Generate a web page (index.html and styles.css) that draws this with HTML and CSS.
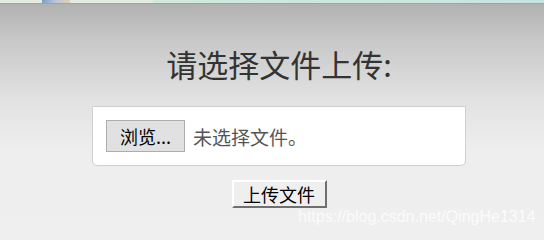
FILE: index.html
```html
<!DOCTYPE html>
<html lang="zh-CN">
<head>
  <meta charset="UTF-8" />
  <meta name="viewport" content="width=device-width, initial-scale=1" />
  <title>文件上传</title>
  <link rel="stylesheet" href="styles.css">
</head>
<body>

  <div class="banner">
    <span class="banner-left"><span class="avatar"></span></span>
    <span class="banner-right"></span>
  </div>

  <form class="upload" action="#" method="post" enctype="multipart/form-data">
    <h2>请选择文件上传:</h2>

    <div class="file-box">
      <span class="browse">浏览...</span>
      <span class="file-name">未选择文件。</span>
    </div>

    <button type="submit">上传文件</button>
  </form>

  <div class="watermark">https://blog.csdn.net/QingHe1314</div>

</body>
</html>
```

FILE: styles.css
```css
html, body {
  height: 100%;
}
body {
  margin: 0;
  font-family: "Noto Sans CJK SC", "Liberation Sans", sans-serif;
  background: linear-gradient(to bottom, #afafaf 0px, #c8c8c8 40px, #e2e2e2 100px, #eeeeee 150px, #efefef 240px);
  color: #333;
  overflow: hidden;
}
.banner {
  display: flex;
  height: 3px;
  border-bottom: 1px solid #9aa8a0;
}
.banner-left {
  width: 153px;
  background: #e3ebe3;
  position: relative;
}
.avatar {
  position: absolute;
  left: 42px;
  top: 0;
  width: 28px;
  height: 3px;
  background: linear-gradient(to right, #7f9fc8, #b9c6dc 50%, #e8cfb0);
}
.banner-right {
  flex: 1;
  background: linear-gradient(to right, #d3e9dc, #c9e6df 70%, #c6e3e3);
}
.upload {
  display: flex;
  flex-direction: column;
  align-items: center;
  padding-left: 14px;
}
h2 {
  margin: 39px 0 0;
  font-size: 31px;
  font-weight: normal;
  line-height: 41px;
  color: #333;
}
.file-box {
  margin-top: 22px;
  width: 374px;
  height: 60px;
  box-sizing: border-box;
  background: #fff;
  border: 1px solid #cfcfcf;
  border-radius: 0 0 5px 5px;
  display: flex;
  align-items: center;
  padding-left: 13px;
  gap: 8px;
}
.browse {
  display: inline-block;
  padding: 0 13px;
  height: 32px;
  line-height: 30px;
  box-sizing: border-box;
  background: #e1e1e1;
  border: 1px solid #adadad;
  font-size: 18px;
  color: #000;
}
.file-name {
  font-size: 19px;
  color: #555;
}
button {
  margin-top: 14px;
  width: 95px;
  height: 28px;
  padding: 0;
  font-family: "Noto Sans CJK SC", sans-serif;
  font-size: 18px;
  line-height: 24px;
  color: #000;
  background: #efefef;
  border: 2px solid;
  border-color: #fff #6f6f6f #6f6f6f #fff;
  border-radius: 0;
}
.watermark {
  position: absolute;
  left: 298px;
  top: 208px;
  font-family: "Liberation Sans", sans-serif;
  font-size: 16px;
  color: rgba(255, 255, 255, 0.75);
}
```
